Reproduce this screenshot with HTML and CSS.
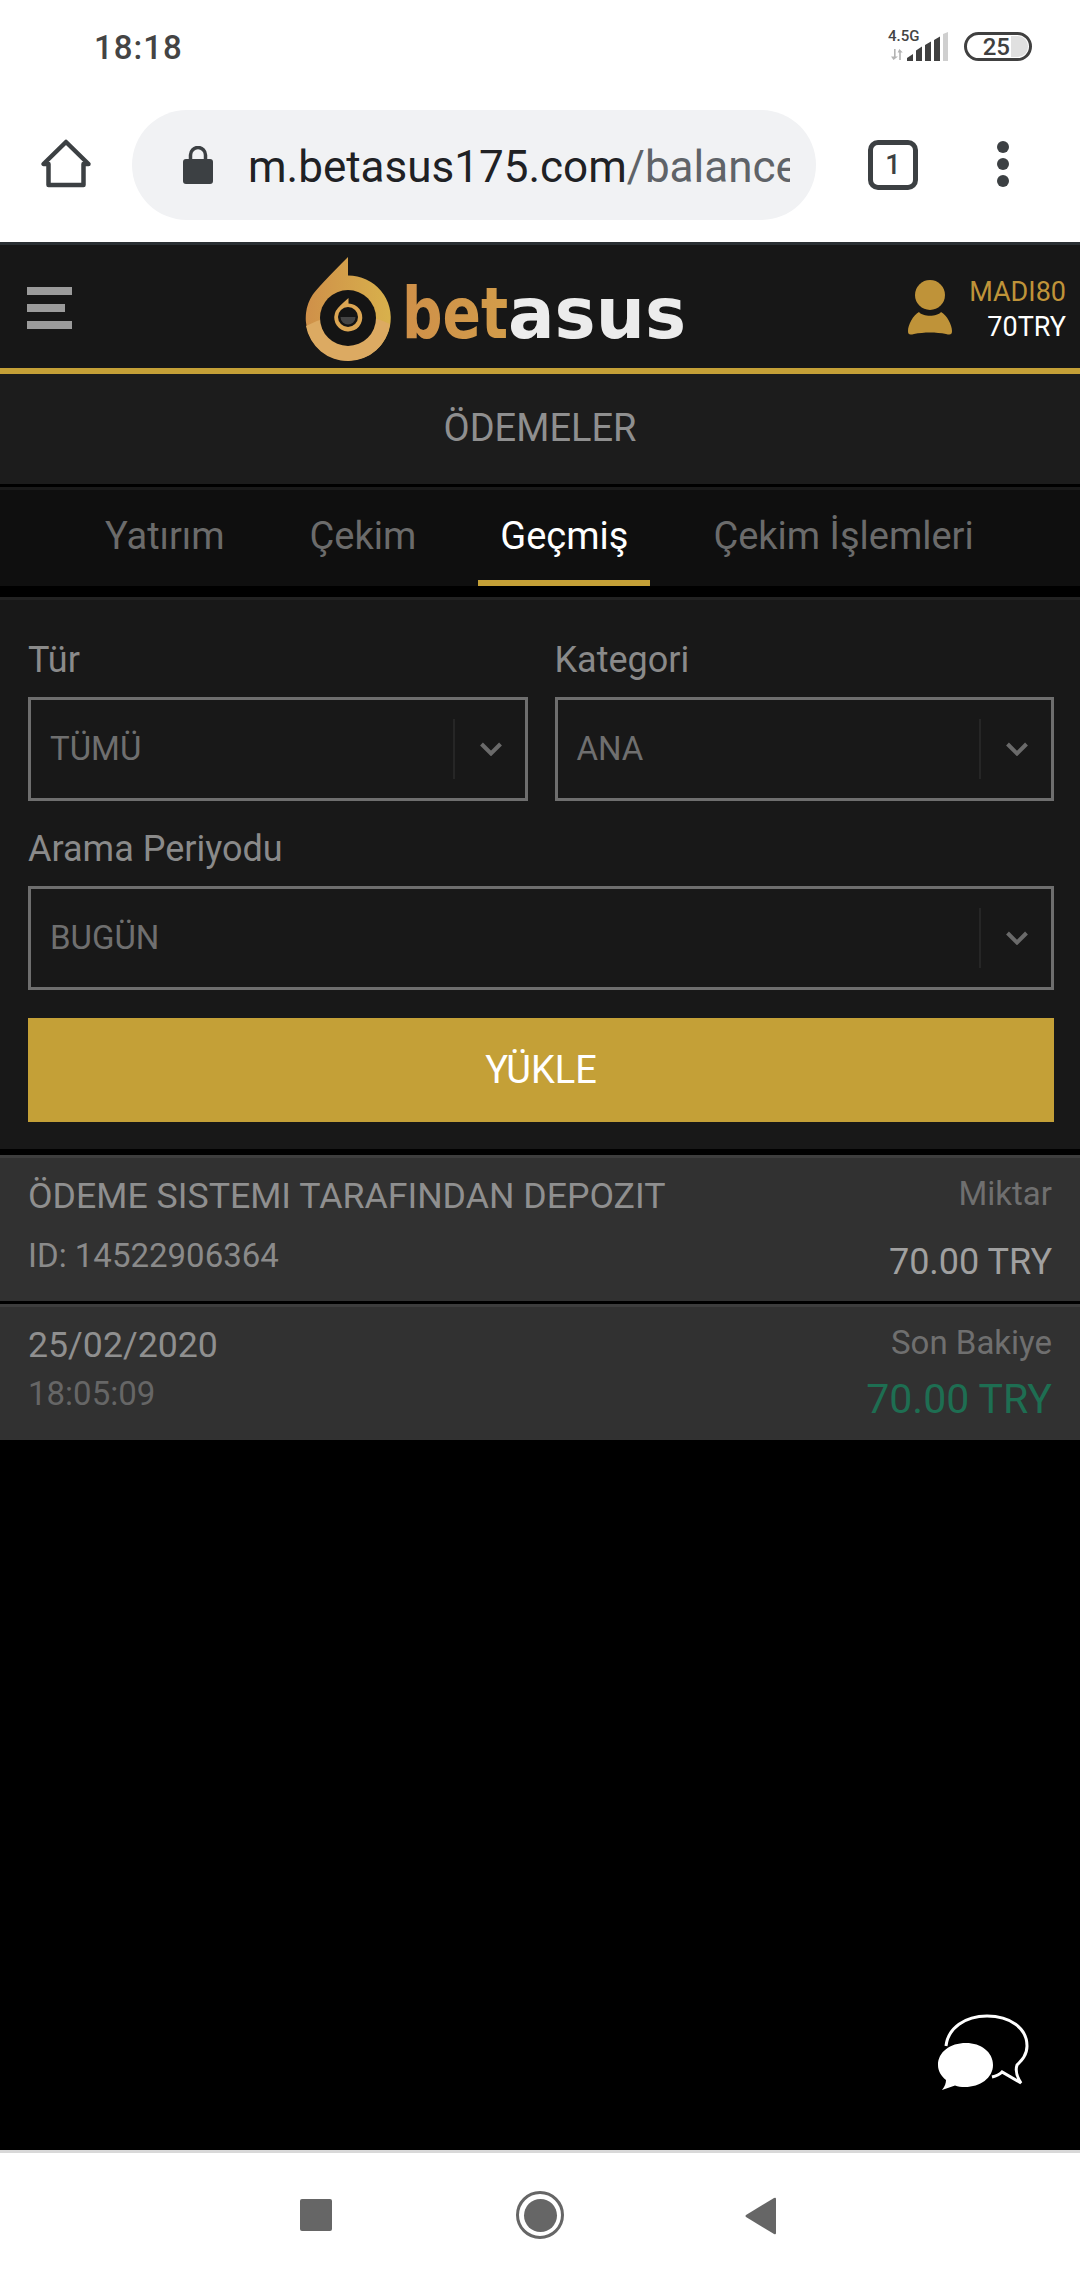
FILE: index.html
```html
<!DOCTYPE html>
<html lang="tr">
<head>
  <meta charset="UTF-8" />
  <meta name="viewport" content="width=device-width, initial-scale=1.0"/>
  <title>Betasus - Ödemeler</title>
  <link rel="stylesheet" href="styles.css">
</head>
<body>

  <div class="status-bar">
    <span class="clock">18:18</span>
    <div class="net">
      <span class="net-type">4.5G</span>
      <svg class="net-arrows" width="14" height="11" viewBox="0 0 14 11"><path d="M4 0h1.6v7.5H8L3.5 11 1 7.5h3zM9.400 0l3.400 3.500h-2V11H9.200V3.500H7.600z" fill="#b4b4b4"/></svg>
    </div>
    <svg class="signal" width="42" height="29" viewBox="0 0 42 29">
      <path d="M0 29V26L6 22V29zM9 29V18.500L15 14.500V29zM18 29V13L24 9.500V29zM27 29V8L33 4.500V29z" fill="#404040"/>
      <path d="M36 29V2L41 0V29z" fill="#cfcfcf"/>
    </svg>
    <div class="battery"><span class="battery-num">25</span><span class="battery-rest"></span></div>
  </div>

  <div class="toolbar">
    <svg class="home-icon" width="56" height="56" viewBox="0 0 56 56"><path d="M28 5L5.500 27H10.500V48H45.500V27H50.500Z" fill="none" stroke="#3c4043" stroke-width="4.500" stroke-linejoin="round"/></svg>
    <div class="url-pill">
      <svg class="lock-icon" width="30" height="38" viewBox="0 0 30 38"><path d="M7.500 14V9A7.500 7.500 0 0 1 22.500 9V14" fill="none" stroke="#3c4043" stroke-width="3.500"/><rect y="13" width="30" height="25" rx="3" fill="#3c4043"/></svg>
      <div class="url"><span class="url-host">m.betasus175.com</span><span class="url-path">/balance</span></div>
    </div>
    <div class="tab-count">1</div>
    <div class="dots"><i></i><i></i><i></i></div>
  </div>

  <header class="site-header">
    <div class="menu-btn"><i></i><i class="short"></i><i></i></div>
    <svg class="logo" width="390" height="110" viewBox="0 0 390 110">
      <defs>
        <linearGradient id="gold" x1="0" y1="0" x2="1" y2="0">
          <stop offset="0" stop-color="#cf9049"/>
          <stop offset="1" stop-color="#d8b14c"/>
        </linearGradient>
      </defs>
      <path d="M45 3V21.500A42.500 42.500 0 1 1 9.500 41Q15 33 45 3Z" fill="url(#gold)"/>
      <path d="M3 72Q45 50 87 70A42.500 42.500 0 0 1 3 72Z" fill="#dcaa62"/>
      <circle cx="45" cy="64" r="28" fill="#141414"/>
      <path d="M45.500 44V49.500A14 14 0 1 1 35 54Q38 50.500 45.500 44Z" fill="#dca653"/>
      <circle cx="45" cy="63" r="10" fill="#141414"/>
      <path d="M37.500 63H52.500A7.500 7.500 0 0 1 37.500 63Z" fill="#444"/>
      <text class="logo-text" y="84"><tspan x="99" textLength="106" lengthAdjust="spacingAndGlyphs" fill="url(#gold)">bet</tspan><tspan x="205" textLength="178" lengthAdjust="spacingAndGlyphs" fill="#ececec">asus</tspan></text>
    </svg>
    <svg class="user-icon" width="44" height="56" viewBox="0 0 44 56">
      <circle cx="22" cy="15" r="15" fill="#bf9339"/>
      <path d="M11 32C15 37 29 37 33 32C39 35 44 45 44 51C44 55 42 55 38 54C28 52 16 52 6 54C2 55 0 55 0 51C0 45 5 35 11 32Z" fill="#bf9339"/>
    </svg>
    <div class="user-info">
      <span class="user-name">MADI80</span>
      <span class="user-balance">70TRY</span>
    </div>
  </header>

  <div class="page-title">ÖDEMELER</div>

  <nav class="tabs">
    <a class="tab tab-yatirim">Yatırım</a>
    <a class="tab tab-cekim">Çekim</a>
    <a class="tab tab-active">Geçmiş</a>
    <a class="tab tab-islem">Çekim İşlemleri</a>
  </nav>

  <section class="filters">
    <div class="filter-row">
      <div class="field">
        <label>Tür</label>
        <div class="select">
          <span class="select-value">TÜMÜ</span>
          <span class="select-arrow"><svg width="24" height="14" viewBox="0 0 24 14"><path d="M2.500 2L12 11.500L21.500 2" fill="none" stroke="#6a6a6a" stroke-width="4"/></svg></span>
        </div>
      </div>
      <div class="field">
        <label>Kategori</label>
        <div class="select">
          <span class="select-value">ANA</span>
          <span class="select-arrow"><svg width="24" height="14" viewBox="0 0 24 14"><path d="M2.500 2L12 11.500L21.500 2" fill="none" stroke="#6a6a6a" stroke-width="4"/></svg></span>
        </div>
      </div>
    </div>
    <div class="field">
      <label>Arama Periyodu</label>
      <div class="select">
        <span class="select-value">BUGÜN</span>
        <span class="select-arrow"><svg width="24" height="14" viewBox="0 0 24 14"><path d="M2.500 2L12 11.500L21.500 2" fill="none" stroke="#6a6a6a" stroke-width="4"/></svg></span>
      </div>
    </div>
    <button class="load-btn">YÜKLE</button>
  </section>

  <main class="results">
    <div class="result-row row-one">
      <div class="cell">
        <span class="desc">ÖDEME SISTEMI TARAFINDAN DEPOZIT</span>
        <span class="tx-id">ID: 14522906364</span>
      </div>
      <div class="cell cell-right">
        <span class="muted">Miktar</span>
        <span class="amount">70.00 TRY</span>
      </div>
    </div>
    <div class="result-row row-two">
      <div class="cell">
        <span class="date">25/02/2020</span>
        <span class="time">18:05:09</span>
      </div>
      <div class="cell cell-right">
        <span class="muted">Son Bakiye</span>
        <span class="amount-green">70.00 TRY</span>
      </div>
    </div>

    <svg class="chat-icon" width="96" height="84" viewBox="0 0 96 84">
      <path d="M8 33C10 15 27 3 49 3C72 3 89 15 89 33C89 42 84 47 79 52C77 58 79 64 83 70L64 59C61 62 58 63 54 64" fill="none" stroke="#fff" stroke-width="3"/>
      <path d="M0 52C0 39 12 30 28 30C43 30 55 39 55 52C55 65 42 74 27 74C23 74 20 73.500 17 72.500L4 77C7 73 8 70 8 67C3 63 0 58 0 52Z" fill="#fff"/>
    </svg>
  </main>

  <footer class="nav-bar">
    <span class="nav-square"></span>
    <span class="nav-circle"><i></i></span>
    <svg class="nav-back" width="32" height="38" viewBox="0 0 32 38"><path d="M31 2V36Q31 38 29 37L1 20Q0 19 1 18L29 1Q31 0 31 2Z" fill="#666"/></svg>
  </footer>

</body>
</html>
```

FILE: styles.css
```css
* {
  box-sizing: border-box;
}

body {
  margin: 0;
  width: 1080px;
  height: 2280px;
  display: flex;
  flex-direction: column;
  font-family: Roboto, sans-serif;
  background: #000;
  overflow: hidden;
}

/* phone status bar */
.status-bar {
  height: 89px;
  background: #fff;
  display: flex;
  align-items: flex-start;
  position: relative;
}

.clock {
  margin: 29px 0 0 94px;
  font-size: 33px;
  line-height: 38px;
  font-weight: 500;
  color: #444;
  letter-spacing: 1px;
}

.net {
  margin: 28px 0 0 auto;
  width: 36px;
  display: flex;
  flex-direction: column;
}

.net-type {
  font-size: 15px;
  line-height: 16px;
  font-weight: 500;
  color: #444;
}

.net-arrows {
  margin: 5px 0 0 2px;
}

.signal {
  margin: 32px 0 0 -17px;
}

.battery {
  margin: 32px 48px 0 15px;
  width: 68px;
  height: 29px;
  border: 3px solid #404040;
  border-radius: 15px;
  display: flex;
  justify-content: flex-end;
  overflow: hidden;
}

.battery-num {
  font-size: 24px;
  line-height: 25px;
  font-weight: 500;
  color: #404040;
  margin-right: 1px;
}

.battery-rest {
  width: 17px;
  background: #e0e0e0;
  border-radius: 0 10px 10px 0;
  margin: 1px 1px 1px 0;
}

/* browser toolbar */
.toolbar {
  height: 153px;
  background: #fff;
  display: flex;
  align-items: flex-start;
  padding-top: 21px;
}

.home-icon {
  margin: 27px 0 0 38px;
}

.url-pill {
  margin-left: 38px;
  width: 684px;
  height: 110px;
  border-radius: 55px;
  background: #f1f2f4;
  display: flex;
  align-items: center;
  padding-left: 51px;
}

.url {
  margin-left: 35px;
  width: 542px;
  overflow: hidden;
  white-space: nowrap;
  font-size: 44px;
  line-height: 56px;
  padding-top: 3px;
  color: #202124;
}

.url-path {
  color: #5f6368;
}

.tab-count {
  margin: 30px 0 0 52px;
  width: 50px;
  height: 50px;
  border: 5px solid #3c4043;
  border-radius: 10px;
  font-size: 27px;
  line-height: 40px;
  font-weight: 500;
  color: #3c4043;
  text-align: center;
}

.dots {
  margin: 31px 0 0 79px;
  display: flex;
  flex-direction: column;
  gap: 5px;
}

.dots i {
  width: 12px;
  height: 12px;
  border-radius: 50%;
  background: #3c4043;
}

/* site header */
.site-header {
  height: 132px;
  background: #171717;
  border-top: 3px solid #2a2f33;
  border-bottom: 6px solid #c4a037;
  display: flex;
  align-items: flex-start;
}

.menu-btn {
  margin: 42px 0 0 27px;
  width: 45px;
  display: flex;
  flex-direction: column;
  gap: 9px;
}

.menu-btn i {
  height: 8px;
  background: #9b9b9b;
}

.menu-btn i.short {
  width: 38px;
}

.logo {
  margin: 9px 0 0 231px;
}

.logo-text {
  font-family: "DejaVu Sans", sans-serif;
  font-weight: 700;
  font-size: 71px;
}

.user-icon {
  margin: 35px 0 0 215px;
}

.user-info {
  margin: 30px 14px 0 auto;
  display: flex;
  flex-direction: column;
  align-items: flex-end;
  font-size: 27px;
  line-height: 35px;
}

.user-name {
  color: #bf9339;
}

.user-balance {
  color: #fff;
}

.page-title {
  height: 110px;
  background: #1c1c1c;
  color: #8f8f8f;
  font-size: 38px;
  line-height: 108px;
  text-align: center;
}

/* tabs */
.tabs {
  margin-top: 3px;
  height: 99px;
  background: #0f0f0f;
  border-top: 3px solid #1a1a1a;
  display: flex;
  font-size: 38px;
  color: #6b6b6b;
}

.tab {
  height: 96px;
  line-height: 92px;
}

.tab-yatirim {
  margin-left: 105px;
}

.tab-cekim {
  margin-left: 85px;
}

.tab-active {
  margin-left: 62px;
  padding: 0 22px;
  color: #fff;
  border-bottom: 6px solid #c4a037;
}

.tab-islem {
  margin-left: 63px;
}

/* filters */
.filters {
  margin-top: 11px;
  height: 552px;
  background: #181818;
  border-top: 3px solid #222;
  padding: 38px 26px 0 28px;
}

.filter-row {
  display: flex;
  gap: 27px;
  margin-bottom: 26px;
}

.field {
  flex: 1;
}

.field label {
  display: block;
  font-size: 36px;
  line-height: 44px;
  color: #8a8a8a;
}

.select {
  margin-top: 15px;
  height: 104px;
  border: 3px solid #6e6e6e;
  display: flex;
  align-items: center;
  padding-left: 19px;
}

.select-value {
  flex: 1;
  font-size: 33px;
  padding-bottom: 2px;
  color: #6f6f6f;
}

.select-arrow {
  width: 72px;
  height: 60px;
  border-left: 2px solid #262626;
  display: flex;
  align-items: center;
  justify-content: center;
  padding-left: 2px;
}

.load-btn {
  display: block;
  margin-top: 28px;
  width: 100%;
  height: 104px;
  border: none;
  background: #c4a037;
  color: #fff;
  font-family: inherit;
  font-size: 38px;
}

/* results */
.results {
  margin-top: 6px;
  flex: 1;
  position: relative;
  background: #000;
}

.result-row {
  background: #313131;
  border-top: 3px solid #3d3d3d;
  display: flex;
  justify-content: space-between;
  padding: 0 28px;
}

.row-one {
  height: 146px;
}

.row-two {
  margin-top: 3px;
  height: 136px;
}

.cell {
  display: flex;
  flex-direction: column;
}

.cell-right {
  align-items: flex-end;
}

.desc {
  margin-top: 18px;
  font-size: 35.7px;
  line-height: 40px;
  color: #8f8f8f;
}

.tx-id {
  margin-top: 20px;
  font-size: 33px;
  line-height: 40px;
  color: #8a8a8a;
}

.muted {
  margin-top: 16px;
  font-size: 33px;
  line-height: 40px;
  color: #6f6f6f;
}

.amount {
  margin-top: 28px;
  font-size: 36px;
  line-height: 40px;
  color: #a0a0a0;
}

.date {
  margin-top: 18px;
  font-size: 35.7px;
  line-height: 40px;
  color: #8f8f8f;
}

.time {
  margin-top: 9px;
  font-size: 33px;
  line-height: 40px;
  color: #666;
}

.amount-green {
  margin-top: 13px;
  font-size: 41px;
  line-height: 46px;
  color: #1e6e52;
}

/* floating chat button */
.chat-icon {
  position: absolute;
  left: 938px;
  top: 858px;
}

/* android nav */
.nav-bar {
  height: 130px;
  background: #fff;
  border-top: 3px solid #d8d8d8;
  display: flex;
  align-items: flex-start;
}

.nav-square {
  margin: 46px 0 0 300px;
  width: 32px;
  height: 32px;
  border-radius: 2px;
  background: #666;
}

.nav-circle {
  margin: 38px 0 0 184px;
  width: 48px;
  height: 48px;
  border: 3px solid #666;
  border-radius: 50%;
  display: flex;
  align-items: center;
  justify-content: center;
}

.nav-circle i {
  width: 33px;
  height: 33px;
  border-radius: 50%;
  background: #666;
}

.nav-back {
  margin: 44px 0 0 181px;
}
```
